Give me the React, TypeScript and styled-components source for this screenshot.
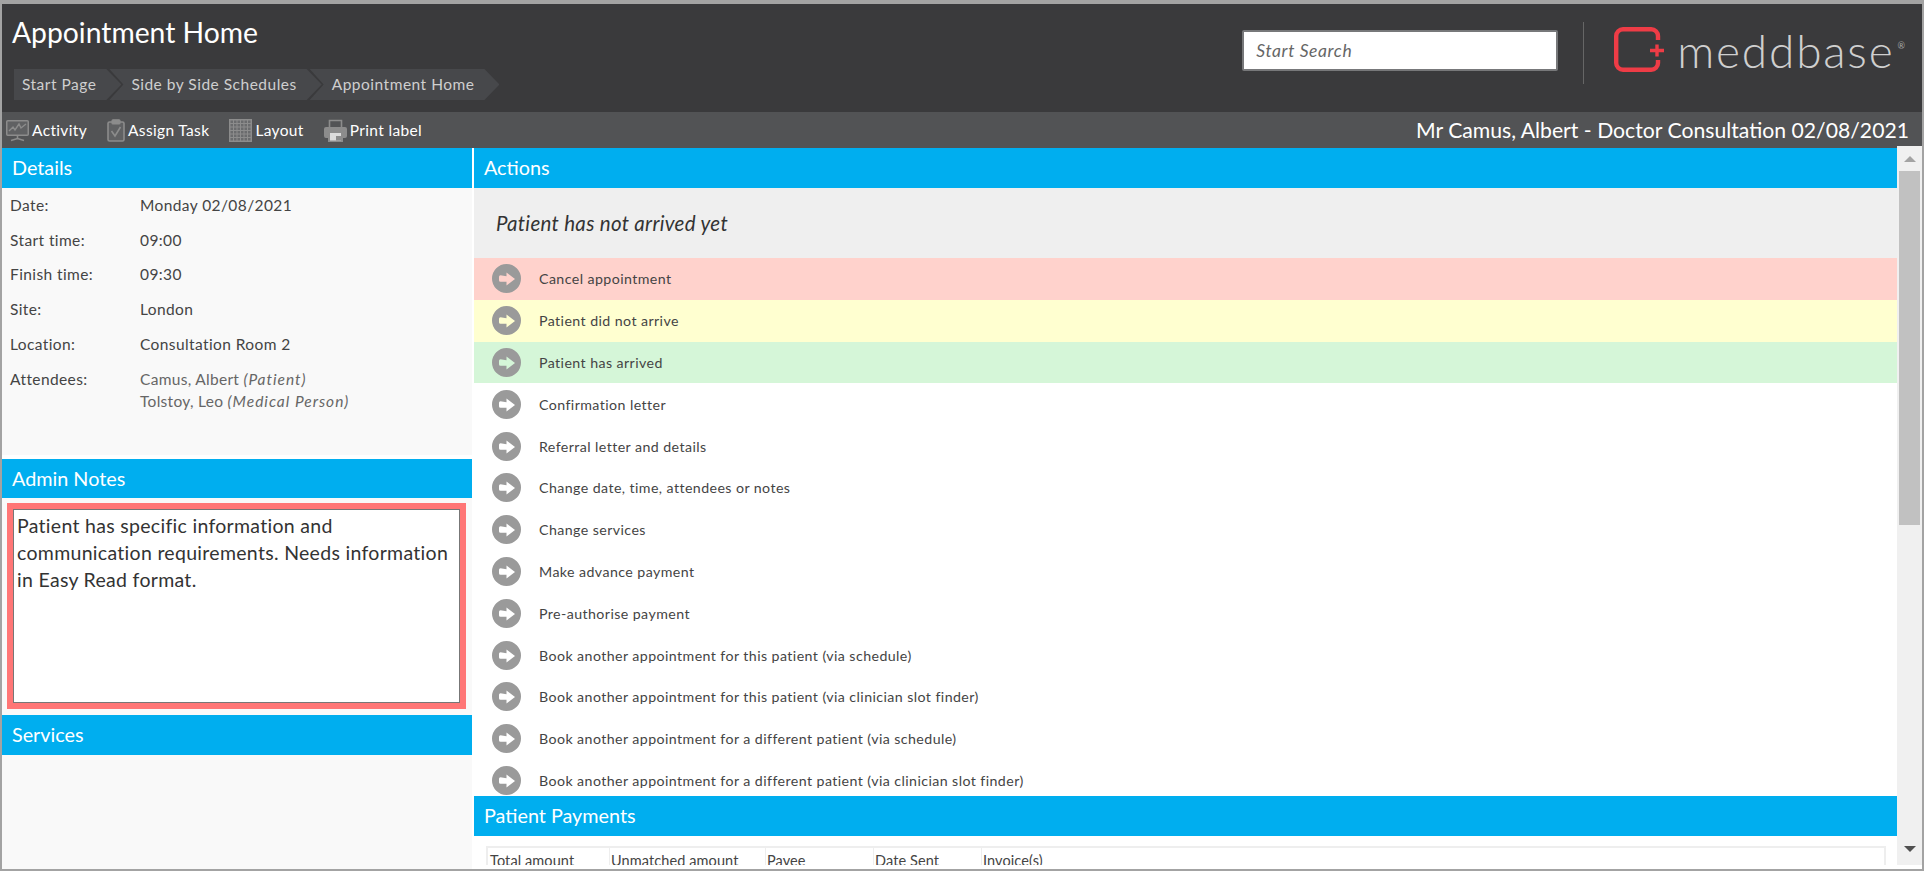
import styled, { createGlobalStyle } from "styled-components";

const GlobalStyle = createGlobalStyle`
  html, body {
    margin: 0;
    padding: 0;
    background: #fff;
  }
  body {
    font-family: "Lato", "Open Sans", sans-serif;
  }
`;

const actions = [
  { label: "Cancel appointment", tone: "#ffd2cc" },
  { label: "Patient did not arrive", tone: "#ffffd0" },
  { label: "Patient has arrived", tone: "#d5f6d8" },
  { label: "Confirmation letter" },
  { label: "Referral letter and details" },
  { label: "Change date, time, attendees or notes" },
  { label: "Change services" },
  { label: "Make advance payment" },
  { label: "Pre-authorise payment" },
  { label: "Book another appointment for this patient (via schedule)" },
  { label: "Book another appointment for this patient (via clinician slot finder)" },
  { label: "Book another appointment for a different patient (via schedule)" },
  { label: "Book another appointment for a different patient (via clinician slot finder)" },
];

const details = [
  ["Date:", "Monday 02/08/2021"],
  ["Start time:", "09:00"],
  ["Finish time:", "09:30"],
  ["Site:", "London"],
  ["Location:", "Consultation Room 2"],
];

function ArrowIcon() {
  return (
    <ArrowSvg viewBox="0 0 29 29" width="29" height="29">
      <path
        fillRule="evenodd"
        fill="#9a9a9a"
        d="M14.5 0a14.5 14.5 0 1 1 0 29a14.5 14.5 0 1 1 0-29zM8.5 11.2a1.5 1.5 0 0 0-1.5 1.5v3.600a1.5 1.5 0 0 0 1.5 1.5h6v3.700l8.500-6.500l-8.500-6.500v3.700z"
      />
    </ArrowSvg>
  );
}

function ActivityIcon() {
  return (
    <svg width="23" height="23" viewBox="0 0 23 23" fill="none" stroke="#8c8c8c">
      <rect x="0.75" y="1.75" width="21.5" height="14.5" rx="1" strokeWidth="1.5" fill="#606163" />
      <polyline points="3,12 7,8 9,11 13,5 15,9 20,5" strokeWidth="1.4" />
      <path d="M11.5 16.5v3M5 21.5l6.5-2l6.5 2" strokeWidth="1.6" />
    </svg>
  );
}

function ClipboardIcon() {
  return (
    <svg width="18" height="23" viewBox="0 0 18 23" fill="none" stroke="#8c8c8c">
      <rect x="1" y="3" width="16" height="19" rx="1.5" strokeWidth="1.6" fill="#606163" />
      <rect x="5" y="0.8" width="8" height="4.2" rx="1" strokeWidth="1.2" fill="#8c8c8c" />
      <polyline points="4.5,12 8,17 13.5,8" strokeWidth="1.6" />
    </svg>
  );
}

function GridIcon() {
  const lines = [1, 4.5, 8, 11.5, 15, 18.5, 22];
  return (
    <svg width="23" height="23" viewBox="0 0 23 23" stroke="#8c8c8c" strokeWidth="1">
      <rect x="0.5" y="0.5" width="22" height="22" fill="#6a6b6d" />
      {lines.map((p) => (
        <path key={p} d={`M${p} 0.5V22.5M0.5 ${p}H22.5`} />
      ))}
    </svg>
  );
}

function PrinterIcon() {
  return (
    <svg width="23" height="23" viewBox="0 0 23 23">
      <path fill="none" stroke="#8c8c8c" strokeWidth="1.6" d="M5.5 8V1.5h12V8" />
      <path fill="#8c8c8c" d="M2 8h19a2 2 0 0 1 2 2v7a2 2 0 0 1-2 2h-2v4H4v-4H2a2 2 0 0 1-2-2v-7a2 2 0 0 1 2-2z" />
      <rect x="6" y="14" width="11" height="7.5" fill="#dcdcdc" />
      <rect x="12" y="17" width="5" height="4.5" fill="#8c8c8c" />
    </svg>
  );
}

function LogoMark() {
  return (
    <svg width="52" height="47" viewBox="0 0 52 47" fill="none" stroke="#ee3c46" strokeWidth="4.4">
      <path d="M44 13V9a6.8 6.8 0 0 0-6.8-6.8H9A6.8 6.8 0 0 0 2.2 9v27A6.8 6.8 0 0 0 9 42.800h28.200a6.800 6.800 0 0 0 6.800-6.800v-3" />
      <path d="M36 23.500h14M43 17.500v12" strokeWidth="3.400" />
    </svg>
  );
}

export default function App() {
  return (
    <>
      <GlobalStyle />
      <Frame>
        <Header>
          <TitleBlock>
            <PageTitle>Appointment Home</PageTitle>
            <Breadcrumbs>
              <Crumb $first>Start Page</Crumb>
              <Crumb>Side by Side Schedules</Crumb>
              <Crumb>Appointment Home</Crumb>
            </Breadcrumbs>
          </TitleBlock>
          <Brand>
            <SearchInput placeholder="Start Search" />
            <Separator />
            <Logo>
              <LogoMark />
              <LogoText>meddbase</LogoText>
              <LogoReg>®</LogoReg>
            </Logo>
          </Brand>
        </Header>

        <Toolbar>
          <ToolGroup>
            <Tool><ActivityIcon />Activity</Tool>
            <Tool><ClipboardIcon />Assign Task</Tool>
            <Tool><GridIcon />Layout</Tool>
            <Tool><PrinterIcon />Print label</Tool>
          </ToolGroup>
          <Context>Mr Camus, Albert - Doctor Consultation 02/08/2021</Context>
        </Toolbar>

        <Main>
          <LeftColumn>
            <SectionTitle>Details</SectionTitle>
            <DetailsPanel>
              {details.map(([label, value]) => (
                <DetailRow key={label}>
                  <DetailLabel>{label}</DetailLabel>
                  <span>{value}</span>
                </DetailRow>
              ))}
              <DetailRow>
                <DetailLabel>Attendees:</DetailLabel>
                <Attendees>
                  Camus, Albert <em>(Patient)</em>
                  <br />
                  Tolstoy, Leo <em>(Medical Person)</em>
                </Attendees>
              </DetailRow>
            </DetailsPanel>
            <SectionTitle $height={39}>Admin Notes</SectionTitle>
            <NotesPanel>
              <NotesBox>
                Patient has specific information and communication requirements. Needs information in Easy Read format.
              </NotesBox>
            </NotesPanel>
            <SectionTitle>Services</SectionTitle>
          </LeftColumn>

          <RightColumn>
            <SectionTitle>Actions</SectionTitle>
            <Status>Patient has not arrived yet</Status>
            <ActionList>
              {actions.map((a) => (
                <ActionRow key={a.label} $tone={a.tone}>
                  <ArrowIcon />
                  {a.label}
                </ActionRow>
              ))}
            </ActionList>
            <SectionTitle>Patient Payments</SectionTitle>
            <PaymentsPanel>
              <PaymentsHead>
                <span>Total amount</span>
                <span>Unmatched amount</span>
                <span>Payee</span>
                <span>Date Sent</span>
                <span>Invoice(s)</span>
              </PaymentsHead>
            </PaymentsPanel>
          </RightColumn>

          <Scrollbar>
            <ScrollUp />
            <ScrollTrack>
              <ScrollThumb />
            </ScrollTrack>
            <ScrollDown />
          </Scrollbar>
        </Main>
      </Frame>
    </>
  );
}

const Frame = styled.div`
  box-sizing: border-box;
  width: 1924px;
  height: 871px;
  border: 2px solid #a3a3a3;
  border-top-width: 4px;
  display: flex;
  flex-direction: column;
  overflow: hidden;
  background: #fff;
`;

const Header = styled.header`
  height: 108px;
  flex: none;
  background: #3a3a3c;
  display: flex;
  justify-content: space-between;
`;

const TitleBlock = styled.div`
  padding: 12px 0 0 10px;
`;

const PageTitle = styled.h1`
  margin: 0;
  height: 53px;
  font-size: 28.3px;
  line-height: 33px;
  font-weight: 400;
  color: #fff;
`;

const Breadcrumbs = styled.div`
  display: flex;
  margin-left: 2px;
`;

const Crumb = styled.div<{ $first?: boolean }>`
  height: 31px;
  line-height: 31px;
  font-size: 15.5px;
  letter-spacing: 0.5px;
  color: #cfcfcf;
  background: #47484b;
  padding: 0 25px 0 ${(p) => (p.$first ? "8px" : "22px")};
  margin-left: ${(p) => (p.$first ? "0" : "-12px")};
  clip-path: ${(p) =>
    p.$first
      ? "polygon(0 0, calc(100% - 15px) 0, 100% 50%, calc(100% - 15px) 100%, 0 100%)"
      : "polygon(0 0, calc(100% - 15px) 0, 100% 50%, calc(100% - 15px) 100%, 0 100%, 14px 50%)"};
`;

const Brand = styled.div`
  display: flex;
  align-items: flex-start;
  padding-right: 17px;
`;

const SearchInput = styled.input`
  box-sizing: border-box;
  width: 316px;
  height: 41px;
  margin-top: 26px;
  padding: 0 12px;
  border: 2px solid #77787a;
  border-radius: 2px;
  background: #fff;
  font-family: "Lato", sans-serif;
  font-size: 17.5px;
  letter-spacing: 0.6px;
  font-style: italic;
  outline: none;
  &::placeholder {
    color: #666;
    opacity: 1;
  }
`;

const Separator = styled.div`
  width: 1px;
  height: 62px;
  margin: 18px 30px 0 25px;
  background: #666;
`;

const Logo = styled.div`
  display: flex;
  align-items: flex-start;
  padding-top: 23px;
`;

const LogoText = styled.span`
  margin-left: 11px;
  margin-top: -4px;
  font-size: 46px;
  line-height: 56px;
  font-weight: 300;
  letter-spacing: 1.8px;
  color: #cfcfcf;
`;

const LogoReg = styled.span`
  font-size: 9px;
  line-height: 12px;
  margin: 13px 0 0 3px;
  color: #a8a8a8;
`;

const Toolbar = styled.div`
  height: 36px;
  flex: none;
  background: #525355;
  display: flex;
  align-items: center;
  justify-content: space-between;
  padding: 0 13px 0 4px;
`;

const ToolGroup = styled.div`
  display: flex;
  align-items: center;
  gap: 20px;
`;

const Tool = styled.div`
  display: flex;
  align-items: center;
  gap: 3px;
  font-size: 15.5px;
  letter-spacing: 0.35px;
  color: #fff;
`;

const Context = styled.div`
  font-size: 21.2px;
  color: #fff;
`;

const Main = styled.div`
  flex: 1;
  min-height: 0;
  display: flex;
`;

const SectionTitle = styled.div<{ $height?: number }>`
  height: ${(p) => p.$height ?? 40}px;
  flex: none;
  box-sizing: border-box;
  padding-left: 10px;
  line-height: 39px;
  font-size: 19.8px;
  color: #fff;
  background: #00aeef;
`;

const LeftColumn = styled.div`
  width: 470px;
  flex: none;
  display: flex;
  flex-direction: column;
  background: #f9f9f9;
`;

const DetailsPanel = styled.div`
  height: 271px;
  flex: none;
  box-sizing: border-box;
  border-bottom: 4px solid #fff;
  font-size: 15.5px;
  letter-spacing: 0.4px;
  line-height: 22px;
  color: #444;
`;

const DetailRow = styled.div`
  display: grid;
  grid-template-columns: 130px 1fr;
  padding: 5.9px 0 6.9px 8px;
`;

const DetailLabel = styled.span`
  color: #444;
`;

const Attendees = styled.span`
  color: #666;
  letter-spacing: 0.3px;
  em {
    letter-spacing: 1px;
  }
`;

const NotesPanel = styled.div`
  height: 217px;
  flex: none;
  box-sizing: border-box;
  padding: 5px 6px 6px 5px;
`;

const NotesBox = styled.div`
  box-sizing: border-box;
  height: 100%;
  padding: 2px 6px 0 3px;
  border: 7px solid #ff7676;
  outline: 1px solid #777;
  outline-offset: -7px;
  background: #fff;
  font-size: 19.5px;
  letter-spacing: 0.3px;
  line-height: 27px;
  color: #333;
`;

const RightColumn = styled.div`
  flex: 1;
  min-width: 0;
  margin-left: 2px;
  padding-bottom: 4px;
  display: flex;
  flex-direction: column;
  background: #fff;
`;

const Status = styled.div`
  height: 70px;
  flex: none;
  box-sizing: border-box;
  padding-left: 22px;
  line-height: 70px;
  font-size: 20.5px;
  letter-spacing: 0.3px;
  font-style: italic;
  color: #333;
  background: #efefef;
`;

const ActionList = styled.div`
  height: 538px;
  flex: none;
  overflow: hidden;
`;

const ActionRow = styled.div<{ $tone?: string }>`
  height: 41.8px;
  display: flex;
  align-items: center;
  gap: 18px;
  padding-left: 18px;
  font-size: 14.2px;
  letter-spacing: 0.42px;
  color: #444;
  background: ${(p) => p.$tone || "#fff"};
`;

const ArrowSvg = styled.svg`
  flex: none;
  filter: blur(0.4px);
`;

const PaymentsPanel = styled.div`
  flex: 1;
  min-height: 0;
  overflow: hidden;
  padding: 10px 11px 0 12px;
`;

const PaymentsHead = styled.div`
  display: grid;
  grid-template-columns: 121px 156px 108px 108px 1fr;
  border: 2px solid #eee;
  height: 40px;
  font-size: 14.5px;
  letter-spacing: 0.1px;
  line-height: 26px;
  color: #444;
  span {
    padding-left: 1px;
    border-left: 1px solid #eee;
  }
  span:first-child {
    padding-left: 2px;
    border-left: 0;
  }
`;

const Scrollbar = styled.div`
  width: 25px;
  flex: none;
  margin: -2px 0 4px;
  position: relative;
  display: flex;
  flex-direction: column;
  background: #f0f0f0;
`;

const ScrollUp = styled.div`
  height: 25px;
  flex: none;
  &::after {
    content: "";
    display: block;
    margin: 10px auto 0;
    width: 0;
    border: 6px solid transparent;
    border-top: 0;
    border-bottom-color: #a3a3a3;
  }
`;

const ScrollTrack = styled.div`
  flex: 1;
  padding: 0 2px;
`;

const ScrollThumb = styled.div`
  height: 354px;
  background: #c1c1c1;
`;

const ScrollDown = styled.div`
  height: 19px;
  flex: none;
  &::after {
    content: "";
    display: block;
    margin: 0 auto;
    width: 0;
    border: 6px solid transparent;
    border-bottom: 0;
    border-top-color: #505050;
  }
`;
